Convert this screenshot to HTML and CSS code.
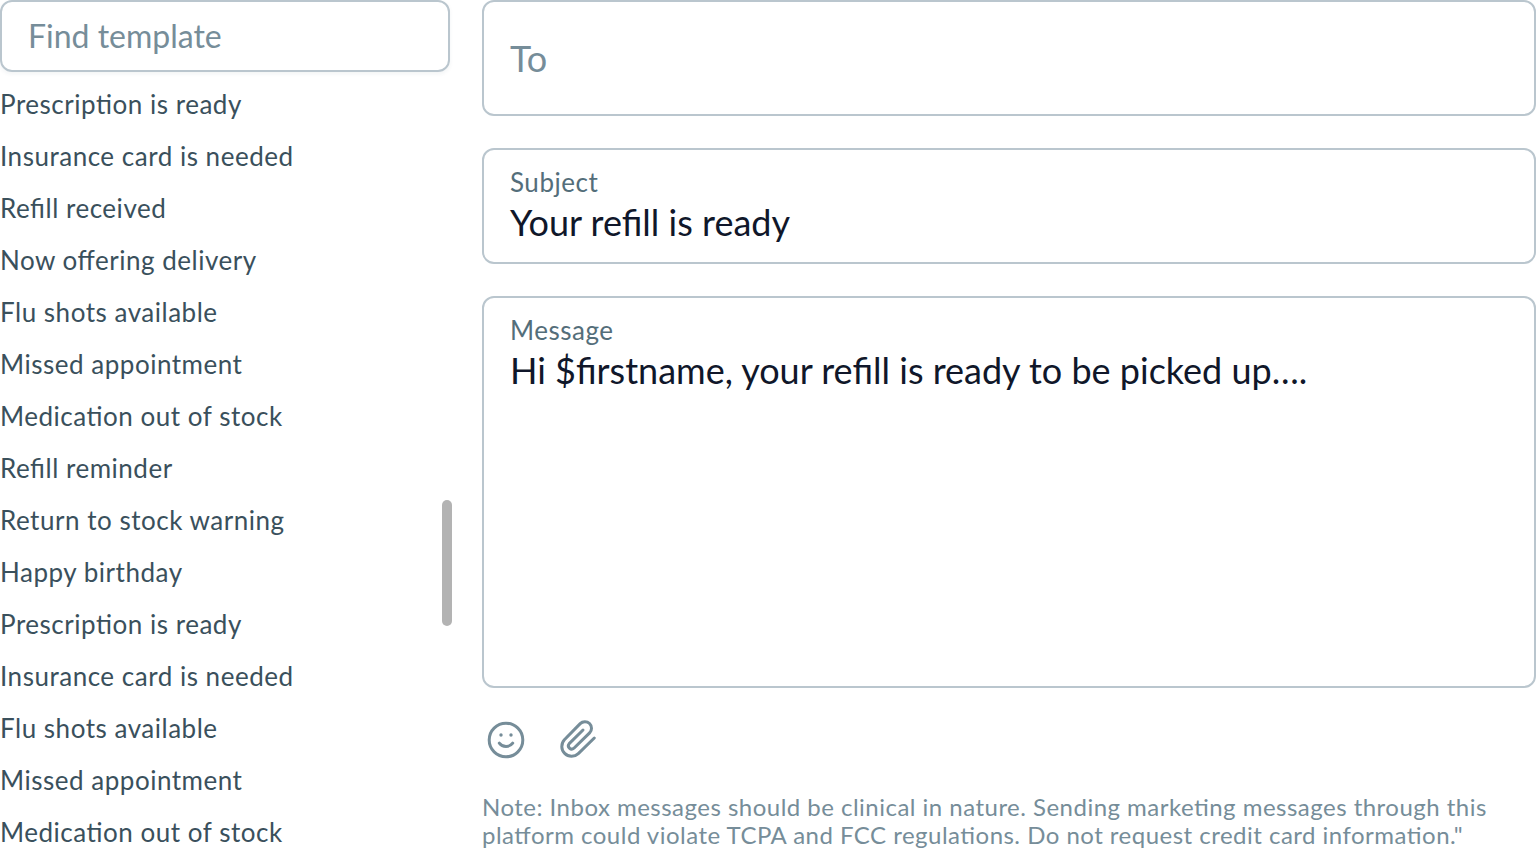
FILE: index.html
```html
<!DOCTYPE html>
<html lang="en">
<head>
<meta charset="utf-8">
<title>New message</title>
<link rel="stylesheet" href="styles.css">
</head>
<body>
<main class="layout">
  <aside class="sidebar">
    <div class="search">Find template</div>
    <ul class="templates">
      <li>Prescription is ready</li>
      <li>Insurance card is needed</li>
      <li>Refill received</li>
      <li>Now offering delivery</li>
      <li>Flu shots available</li>
      <li>Missed appointment</li>
      <li>Medication out of stock</li>
      <li>Refill reminder</li>
      <li>Return to stock warning</li>
      <li>Happy birthday</li>
      <li>Prescription is ready</li>
      <li>Insurance card is needed</li>
      <li>Flu shots available</li>
      <li>Missed appointment</li>
      <li>Medication out of stock</li>
    </ul>
    <div class="scroll-thumb"></div>
  </aside>
  <section class="compose">
    <div class="field field-to"><span class="placeholder">To</span></div>
    <div class="field field-subject">
      <span class="label">Subject</span>
      <span class="value">Your refill is ready</span>
    </div>
    <div class="field field-message">
      <span class="label">Message</span>
      <span class="value">Hi $firstname, your refill is ready to be picked up….</span>
    </div>
    <div class="tools">
      <svg class="icon" viewBox="0 0 48 48"><circle cx="24" cy="24" r="16.800"/><path d="M17.300 27.200c3.200 4.400 10.200 4.400 13.400 0"/><circle class="dot" cx="19" cy="19" r="1.700"/><circle class="dot" cx="29" cy="19" r="1.700"/></svg>
      <svg class="icon" viewBox="0 0 48 48"><path d="M40.300 22 24.300 37.600A9.800 9.800 0 0 1 10.400 23.800L26.200 7.600A6.600 6.600 0 0 1 35.600 16.900L19.900 32.200A3.300 3.300 0 0 1 15.200 27.600L29 14"/></svg>
    </div>
    <p class="note">Note: Inbox messages should be clinical in nature. Sending marketing messages through this<br>platform could violate TCPA and FCC regulations. Do not request credit card information."</p>
  </section>
</main>
</body>
</html>
```
FILE: styles.css
```css
* { box-sizing: border-box; }
body {
  margin: 0;
  background: #fff;
  font-family: Lato, "Liberation Sans", sans-serif;
  font-feature-settings: "liga" 1;
  overflow: hidden;
}
.layout {
  display: grid;
  grid-template-columns: 452px 1054px;
  column-gap: 30px;
  height: 852px;
  overflow: hidden;
}
.sidebar { position: relative; }
.search {
  width: 450px;
  height: 72px;
  padding: 0 26px;
  border: 2px solid #bac6ce;
  border-radius: 12px;
  box-shadow: 0 2px 4px rgba(30, 60, 80, .06);
  color: #768d99;
  font-size: 32px;
  line-height: 67px;
}
.templates {
  margin: 6px 0 0;
  padding: 0;
  list-style: none;
  color: #3a505c;
  font-size: 26px;
  letter-spacing: .02em;
  line-height: 52px;
}
.scroll-thumb {
  position: absolute;
  top: 500px;
  right: 0;
  width: 10px;
  height: 126px;
  border-radius: 5px;
  background: #b3b3b3;
}
.field {
  display: flex;
  flex-direction: column;
  padding: 16px 26px;
  margin-bottom: 32px;
  border: 2px solid #bac6ce;
  border-radius: 12px;
}
.field-to, .field-subject { height: 116px; }
.field-message { height: 392px; }
.placeholder {
  color: #768d99;
  font-size: 36px;
  line-height: 80px;
}
.label {
  color: #546e7a;
  font-size: 26px;
  letter-spacing: .02em;
  line-height: 32px;
}
.value {
  color: #10172a;
  font-size: 36px;
  line-height: 49px;
}
.tools {
  display: flex;
  gap: 24px;
  margin-top: -4px;
}
.icon {
  width: 48px;
  height: 48px;
  fill: none;
  stroke: #768d99;
  stroke-width: 3;
  stroke-linecap: round;
  stroke-linejoin: round;
}
.dot { fill: #768d99; stroke: none; }
.note {
  margin: 29px 0 0;
  color: #768d99;
  font-size: 24px;
  letter-spacing: .02em;
  line-height: 28px;
  white-space: nowrap;
}
```
